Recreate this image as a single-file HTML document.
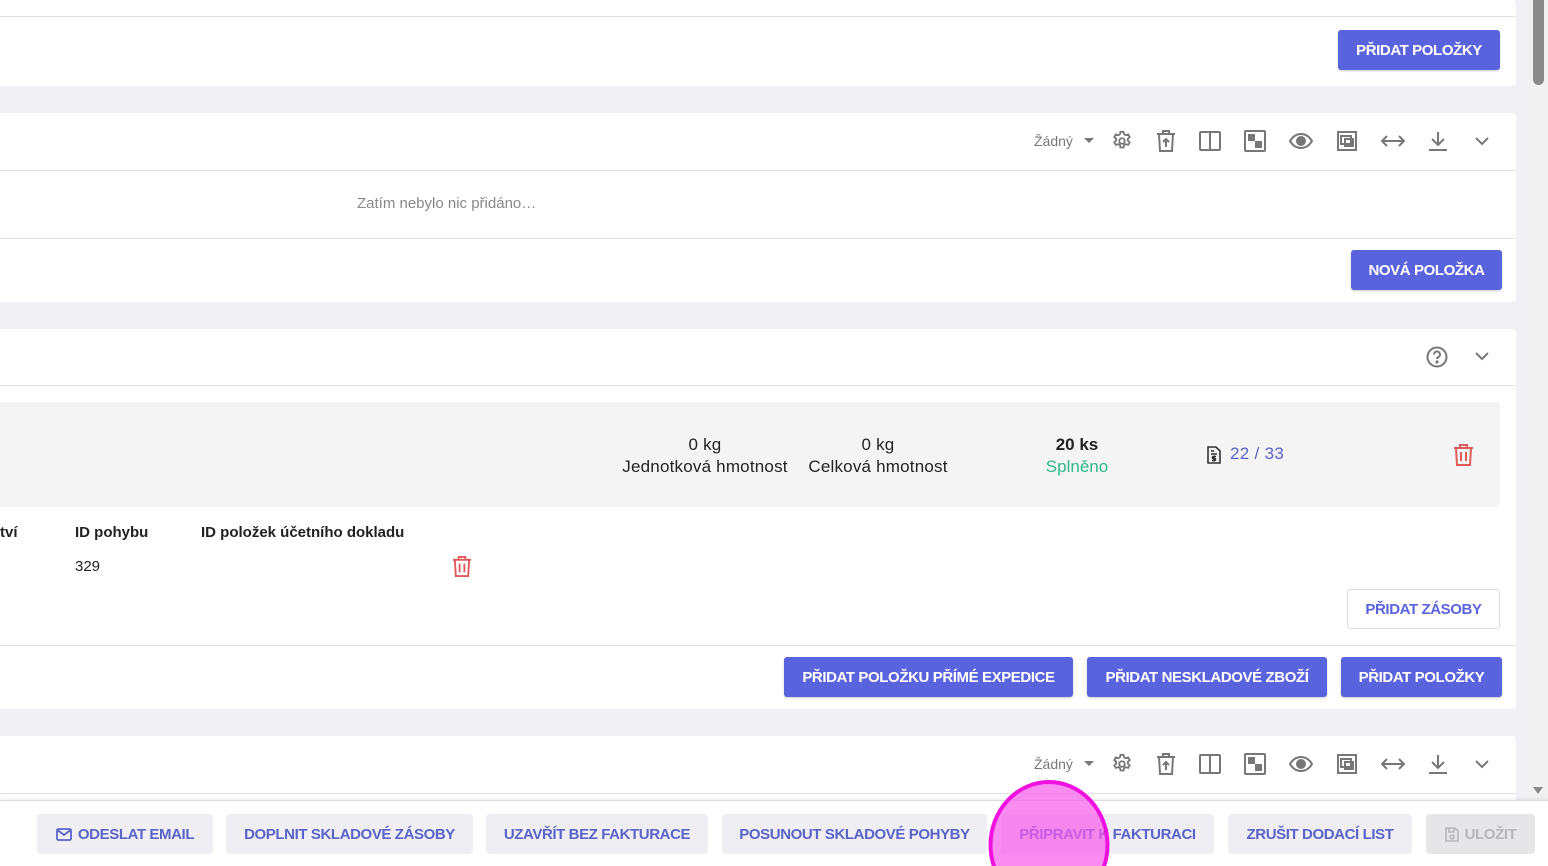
<!DOCTYPE html>
<html><head><meta charset="utf-8"><style>
*{box-sizing:border-box;margin:0;padding:0}
html,body{width:1548px;height:866px;overflow:hidden}
body{background:#f0f0f5;font-family:"Liberation Sans",sans-serif;color:#222}
#w{position:relative;width:1548px;height:866px;overflow:hidden}
.a{position:absolute}
.card{position:absolute;left:0;width:1516px;background:#fff;border-radius:0 4px 4px 0}
.line{position:absolute;left:0;width:1516px;height:1px;background:#e2e2e6}
.btn{position:absolute;height:40px;background:#5a63de;color:#fff;border-radius:3px;font-size:15px;font-weight:bold;letter-spacing:-0.4px;display:flex;align-items:center;justify-content:center;box-shadow:0 1px 2px rgba(0,0,0,.2)}
.ob{position:absolute;height:40px;border:1px solid #dcdce2;color:#5a63de;border-radius:3px;font-size:15px;font-weight:bold;letter-spacing:-0.4px;display:flex;align-items:center;justify-content:center}
.gb{position:absolute;top:814px;height:40px;background:#eeeef3;color:#5a63c8;border-radius:4px;font-size:15px;font-weight:bold;letter-spacing:-0.4px;display:flex;align-items:center;justify-content:center}
.tb{position:absolute;display:flex;align-items:center;color:#777}
.tb svg{margin-left:23px}
.t{position:absolute;font-size:16px;white-space:nowrap}
</style></head><body><div id="w">
<div class="card" style="top:0;height:86px"></div>
<div class="line" style="top:16px"></div>
<div class="btn" style="left:1338px;top:30px;width:162px">PŘIDAT POLOŽKY</div>
<div class="card" style="top:113px;height:189px"></div>
<div class="line" style="top:170px"></div>
<div class="line" style="top:238px"></div>
<div class="t" style="left:357px;top:195px;font-size:15px;color:#888">Zatím nebylo nic přidáno…</div>
<div class="btn" style="left:1351px;top:250px;width:151px">NOVÁ POLOŽKA</div>
<div class="card" style="top:329px;height:380px"></div>
<div class="line" style="top:385px"></div>
<div class="line" style="top:645px"></div>
<svg class="a" style="left:1426px;top:346px" width="22" height="22" viewBox="0 0 22 22" fill="none" stroke="#777" stroke-width="2"><circle cx="11" cy="11" r="9.5"/><path d="M8 8.5a3 3 0 1 1 4 2.8c-.7.3-1 .8-1 1.7"/><circle cx="11" cy="16" r=".6" fill="#777"/></svg>
<svg class="a" style="left:1474px;top:350px" width="16" height="12" viewBox="0 0 16 12" fill="none" stroke="#777" stroke-width="2"><path d="M2 3l6 6 6-6"/></svg>
<div class="a" style="left:0;top:402px;width:1500px;height:105px;background:#f4f4f5;border-radius:0 4px 4px 0"></div>
<div class="t" style="left:612px;top:434px;width:186px;text-align:center;line-height:22px;font-size:17px;letter-spacing:.2px">0 kg<br>Jednotková hmotnost</div>
<div class="t" style="left:800px;top:434px;width:156px;text-align:center;line-height:22px;font-size:17px;letter-spacing:.2px">0 kg<br>Celková hmotnost</div>
<div class="t" style="left:1030px;top:434px;width:94px;text-align:center;line-height:22px;font-size:17px"><b>20 ks</b><br><span style="color:#2fb98a">Splněno</span></div>
<svg class="a" style="left:1207px;top:446px" width="14" height="18" viewBox="0 0 14 18" fill="none" stroke="#333" stroke-width="1.6"><path d="M1 1h8l4 4v12H1z"/><path d="M4 5h3M4 8h6"/><path d="M9 10.5H6.5a1 1 0 0 0 0 2h1a1 1 0 0 1 0 2H5M7 9.5v6"/></svg>
<div class="t" style="left:1230px;top:444px;font-size:17px;color:#5a63c8;letter-spacing:.3px">22 / 33</div>
<svg class="a" style="left:1453px;top:443px" width="21" height="24" viewBox="0 0 21 24" fill="none" stroke="#e05a5a" stroke-width="2"><path d="M1 5h19M7 5V2h7v3M3 5l1 17h13l1-17M8 9v9M13 9v9"/></svg>
<div class="t" style="left:0;top:524px;font-weight:bold;font-size:15px">tví</div>
<div class="t" style="left:75px;top:524px;font-weight:bold;font-size:15px">ID pohybu</div>
<div class="t" style="left:201px;top:524px;font-weight:bold;font-size:15px">ID položek účetního dokladu</div>
<div class="t" style="left:75px;top:558px;font-size:15px">329</div>
<svg class="a" style="left:452px;top:555px" width="20" height="23" viewBox="0 0 21 24" fill="none" stroke="#e05a5a" stroke-width="2"><path d="M1 5h19M7 5V2h7v3M3 5l1 17h13l1-17M8 9v9M13 9v9"/></svg>
<div class="ob" style="left:1347px;top:589px;width:153px">PŘIDAT ZÁSOBY</div>
<div class="btn" style="left:784px;top:657px;width:289px">PŘIDAT POLOŽKU PŘÍMÉ EXPEDICE</div>
<div class="btn" style="left:1087px;top:657px;width:240px">PŘIDAT NESKLADOVÉ ZBOŽÍ</div>
<div class="btn" style="left:1341px;top:657px;width:161px">PŘIDAT POLOŽKY</div>
<div class="card" style="top:736px;height:70px"></div>
<div class="line" style="top:793px"></div>
<div id="tb1" class="tb" style="left:1034px;top:130px;height:22px"></div>
<div id="tb2" class="tb" style="left:1034px;top:753px;height:22px"></div>
<div class="a" style="left:1528px;top:0;width:20px;height:800px;background:#f1f1f1"></div>
<div class="a" style="left:1533px;top:0;width:11px;height:85px;background:#8a8a8a;border-radius:0 0 6px 6px"></div>
<div class="a" style="left:1533px;top:787px;width:0;height:0;border-left:5px solid transparent;border-right:5px solid transparent;border-top:7px solid #888"></div>
<div class="a" style="left:0;top:800px;width:1548px;height:66px;background:#fff;border-top:1px solid #dcdce0;box-shadow:0 -1px 3px rgba(0,0,0,.08)"></div>
<div class="gb" style="left:37px;width:176px"><svg width="16" height="13" viewBox="0 0 16 13" fill="none" stroke="#5a63c8" stroke-width="1.8" style="margin-right:6px"><rect x="1" y="1" width="14" height="11" rx="1.5"/><path d="M1.5 2l6.5 5 6.5-5"/></svg>ODESLAT EMAIL</div>
<div class="gb" style="left:226px;width:247px">DOPLNIT SKLADOVÉ ZÁSOBY</div>
<div class="gb" style="left:486px;width:222px">UZAVŘÍT BEZ FAKTURACE</div>
<div class="gb" style="left:722px;width:265px">POSUNOUT SKLADOVÉ POHYBY</div>
<div class="gb" style="left:1001px;width:213px">PŘIPRAVIT K FAKTURACI</div>
<div class="gb" style="left:1228px;width:184px">ZRUŠIT DODACÍ LIST</div>
<div class="gb" style="left:1426px;width:109px;background:#e6e6e8;color:#b5b5bb"><svg width="14" height="15" viewBox="0 0 14 15" fill="none" stroke="#b5b5bb" stroke-width="1.6" style="margin-right:6px"><path d="M1 1h9l3 3v10H1z"/><path d="M4 1v4h5V1"/><circle cx="7" cy="10" r="2"/></svg>ULOŽIT</div>
<svg class="a" style="left:986px;top:778px" width="126" height="88" viewBox="0 0 126 88"><ellipse cx="63" cy="67" rx="58.5" ry="63" fill="rgba(248,90,235,.7)" stroke="#f010e0" stroke-width="4"/></svg>
</div>
<script>
var ic='<span style="font-size:14px;color:#777">Žádný</span><svg style="margin-left:11px" width="10" height="6" viewBox="0 0 10 6"><path d="M0 0h10L5 5z" fill="#777"/></svg>'+
'<svg width="22" height="22" viewBox="0 0 24 24" fill="none" stroke="#777" stroke-width="2" style="margin-left:17px"><circle cx="12" cy="12" r="3"/><path d="M10.3 2h3.4l.5 2.6 2 1.1 2.5-.9 1.7 2.9-2 1.7v2.3l2 1.7-1.7 2.9-2.5-.9-2 1.1-.5 2.6h-3.4l-.5-2.6-2-1.1-2.5.9-1.7-2.9 2-1.7v-2.3l-2-1.7 1.7-2.9 2.5.9 2-1.1z"/></svg>'+
'<svg width="20" height="22" viewBox="0 0 20 22" fill="none" stroke="#777" stroke-width="2"><path d="M1 4h18M7 4V1h6v3M3 4l1 17h12l1-17M10 17v-8M7 12l3-3 3 3"/></svg>'+
'<svg width="22" height="20" viewBox="0 0 22 20" fill="none" stroke="#777" stroke-width="2"><rect x="1" y="1" width="20" height="18" rx="1"/><path d="M11 1v18"/></svg>'+
'<svg width="22" height="22" viewBox="0 0 22 22"><rect x="1" y="1" width="20" height="20" rx="1" fill="none" stroke="#777" stroke-width="2"/><rect x="4" y="4" width="7" height="7" fill="#777"/><rect x="11" y="11" width="7" height="7" fill="#777"/></svg>'+
'<svg width="24" height="16" viewBox="0 0 24 16" fill="none" stroke="#777" stroke-width="2"><path d="M1 8c3-5 7-7 11-7s8 2 11 7c-3 5-7 7-11 7S4 13 1 8z"/><circle cx="12" cy="8" r="4" fill="#777"/></svg>'+
'<svg width="22" height="22" viewBox="0 0 22 22" fill="none" stroke="#777" stroke-width="2"><rect x="2" y="2" width="18" height="18"/><rect x="5" y="6" width="10" height="8"/><rect x="9" y="9" width="8" height="7"/></svg>'+
'<svg width="24" height="14" viewBox="0 0 24 14" fill="none" stroke="#777" stroke-width="2"><path d="M2 7h20M6 2L1 7l5 5M18 2l5 5-5 5"/></svg>'+
'<svg width="20" height="20" viewBox="0 0 20 20" fill="none" stroke="#777" stroke-width="2"><path d="M10 1v13M4 8l6 6 6-6M1 19h18"/></svg>'+
'<svg width="16" height="10" viewBox="0 0 16 10" fill="none" stroke="#777" stroke-width="2" style="margin-left:26px"><path d="M2 2l6 6 6-6"/></svg>';
document.getElementById('tb1').innerHTML=ic;document.getElementById('tb2').innerHTML=ic;
</script>
</body></html>
